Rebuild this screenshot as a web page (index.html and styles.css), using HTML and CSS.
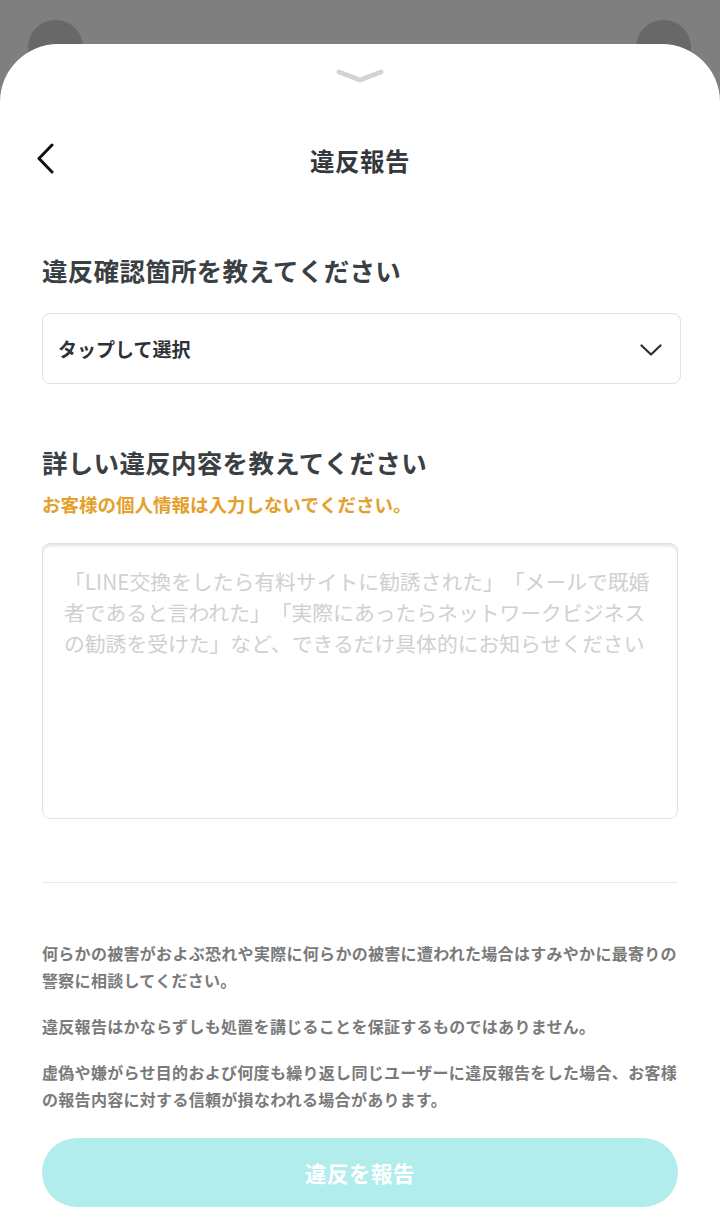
FILE: index.html
```html
<!DOCTYPE html>
<html lang="ja">
<head>
<meta charset="utf-8">
<link rel="stylesheet" href="styles.css">
</head>
<body>
<div class="backdrop">
  <span class="bg-btn bg-left"></span>
  <span class="bg-btn bg-right"></span>
</div>
<div class="sheet">
  <div class="handle">
    <svg width="48" height="14" viewBox="0 0 48 14"><path d="M3 3 L24 11 L45 3" fill="none" stroke="#d4d4d4" stroke-width="5" stroke-linecap="round" stroke-linejoin="round"/></svg>
  </div>
  <div class="header">
    <svg class="back" width="20" height="32" viewBox="0 0 20 32"><path d="M16 2 L3 15.5 L16 29" fill="none" stroke="#111" stroke-width="3" stroke-linecap="round" stroke-linejoin="round"/></svg>
    <h1 class="title">違反報告</h1>
  </div>
  <div class="content">
    <h2 class="q q1">違反確認箇所を教えてください</h2>
    <div class="select">
      <span>タップして選択</span>
      <svg width="22" height="12" viewBox="0 0 22 12"><path d="M1.5 1.5 L11 10.5 L20.5 1.5" fill="none" stroke="#2b2f33" stroke-width="2.2" stroke-linecap="round" stroke-linejoin="round"/></svg>
    </div>
    <h2 class="q q2">詳しい違反内容を教えてください</h2>
    <p class="warn">お客様の個人情報は入力しないでください。</p>
    <textarea class="detail" placeholder="「LINE交換をしたら有料サイトに勧誘された」「メールで既婚者であると言われた」「実際にあったらネットワークビジネスの勧誘を受けた」など、できるだけ具体的にお知らせください"></textarea>
    <hr class="divider">
    <p class="note n1">何らかの被害がおよぶ恐れや実際に何らかの被害に遭われた場合はすみやかに最寄りの警察に相談してください。</p>
    <p class="note">違反報告はかならずしも処置を講じることを保証するものではありません。</p>
    <p class="note">虚偽や嫌がらせ目的および何度も繰り返し同じユーザーに違反報告をした場合、お客様の報告内容に対する信頼が損なわれる場合があります。</p>
    <button class="submit" type="button">違反を報告</button>
  </div>
</div>
</body>
</html>
```
FILE: styles.css
```css
* { box-sizing: border-box; }
html, body { margin: 0; padding: 0; }
body {
  background: #7f7f7f;
  font-family: "Noto Sans CJK JP", "Noto Sans", sans-serif;
  width: 720px;
  height: 1215px;
  overflow: hidden;
  position: relative;
  text-spacing-trim: space-all;
}
.backdrop { height: 44px; position: relative; }
.bg-btn {
  position: absolute;
  top: 20px;
  width: 55px;
  height: 55px;
  border-radius: 50%;
  background: #686868;
}
.bg-left { left: 28px; }
.bg-right { left: 636px; }
.sheet {
  position: relative;
  background: #fff;
  border-radius: 58px 58px 0 0;
  height: 1171px;
}
.handle {
  height: 86px;
  display: flex;
  justify-content: center;
  padding-top: 25px;
}
.handle svg { display: block; }
.header {
  height: 60px;
  display: flex;
  align-items: center;
  justify-content: center;
  position: relative;
}
.back { position: absolute; left: 36px; top: 13px; }
.title {
  margin: 0;
  font-size: 24.5px;
  font-weight: 700;
  color: #33383d;
  letter-spacing: 0.5px;
}
.content { padding: 0 42px; }
.q {
  margin: 0;
  font-size: 25.5px;
  line-height: 36px;
  font-weight: 700;
  color: #3a3f44;
  letter-spacing: 0.3px;
}
.q1 { margin-top: 62px; }
.select {
  margin-top: 25px;
  height: 71px;
  margin-right: -3px;
  border: 1px solid #e2e2e2;
  border-radius: 8px;
  display: flex;
  align-items: center;
  justify-content: space-between;
  padding: 0 18px 0 15px;
  font-size: 19px;
  font-weight: 700;
  color: #2e3236;
}
.select svg { display: block; margin-top: 2px; }
.q2 { margin-top: 60px; }
.warn {
  margin: 10px 0 0;
  font-size: 18.5px;
  line-height: 28px;
  font-weight: 700;
  color: #e3a02b;
}
.detail {
  display: block;
  margin-top: 25px;
  width: 636px;
  height: 276px;
  border: 1px solid #e2e2e2;
  border-radius: 8px;
  box-shadow: inset 0 3px 3px -1px rgba(0,0,0,0.12);
  padding: 22px 20px 0 21px;
  font-family: "Noto Sans CJK JP", "Noto Sans", sans-serif;
  font-size: 20.8px;
  line-height: 31px;
  resize: none;
  background: #fff;
  outline: none;
  text-spacing-trim: space-all;
}
.detail::placeholder { color: #d0d0d0; }
.divider {
  margin: 63px 0 0;
  border: 0;
  border-top: 1.5px solid #e8e8e8;
  height: 0;
}
.note {
  margin: 19px 0 0;
  font-size: 16px;
  line-height: 27px;
  font-weight: 700;
  color: #7a7a7a;
  letter-spacing: 0.3px;
}
.n1 { margin-top: 57px; }
.submit {
  display: block;
  margin-top: 25px;
  width: 636px;
  height: 69px;
  border: 0;
  border-radius: 35px;
  background: #b2edee;
  color: #fff;
  font-family: "Noto Sans CJK JP", "Noto Sans", sans-serif;
  font-size: 21.5px;
  font-weight: 700;
  letter-spacing: 0.5px;
}
```
